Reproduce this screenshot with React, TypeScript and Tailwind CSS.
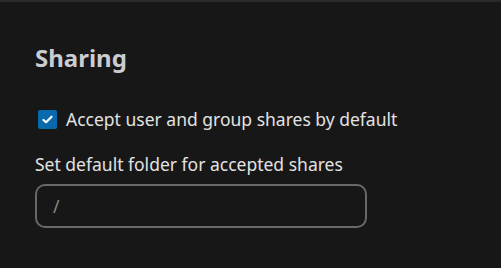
import React, { useState } from 'react';

const App: React.FC = () => {
    const [accept, setAccept] = useState(true);
    const [folder, setFolder] = useState('');

    return (
        <div className="w-[501px] h-[268px] bg-[#171717] border-t-2 border-[#2a2a2a] font-['Noto_Sans',sans-serif] text-[#e2e2e2]">
            <div className="pl-[35px] pt-[40px]">
                <h2 className="text-[24px] font-bold leading-[32px] text-[#c9cdd1]">Sharing</h2>
                <label className="mt-[34px] ml-[3px] flex items-center gap-[9px] cursor-pointer">
                    <input
                        type="checkbox"
                        checked={accept}
                        onChange={e => setAccept(e.target.checked)}
                        className="sr-only"
                    />
                    <span className="w-[19px] h-[19px] rounded-[2px] bg-[#0a69ad] flex items-center justify-center">
                        {accept && (
                            <svg viewBox="0 0 16 16" className="w-[13px] h-[13px]" fill="none" stroke="white" strokeWidth="2.6" strokeLinecap="round" strokeLinejoin="round">
                                <path d="M3 8.5l3.2 3L13 4.5"/>
                            </svg>
                        )}
                    </span>
                    <span className="text-[17.5px] leading-[22px]">Accept user and group shares by default</span>
                </label>
                <div className="mt-[23px] text-[17.5px] leading-[22px]">Set default folder for accepted shares</div>
                <input
                    type="text"
                    value={folder}
                    onChange={e => setFolder(e.target.value)}
                    placeholder="/"
                    className="mt-[9px] w-[332px] h-[44px] rounded-[10px] border-2 border-[#686868] bg-transparent px-[16px] text-[17.5px] text-[#e2e2e2] placeholder:text-[#8a8a8a] outline-none"
                />
            </div>
        </div>
    );
};

export default App;
